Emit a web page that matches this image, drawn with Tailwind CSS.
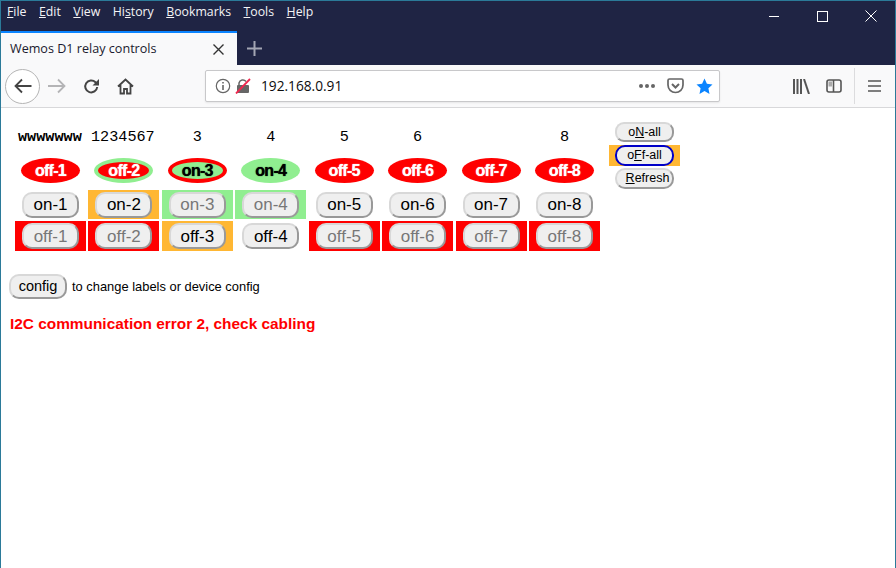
<!DOCTYPE html>
<html lang="en">
<head>
  <meta charset="UTF-8" />
  <title>Wemos D1 relay controls</title>
  <script src="https://cdn.jsdelivr.net/npm/@tailwindcss/browser@4"></script>
</head>
<body class="w-[896px] h-[568px] overflow-hidden bg-white border border-[#2b7a99] border-b-0 font-['Liberation_Sans',sans-serif] flex flex-col">

  <!-- title bar + menu -->
  <div class="h-[64px] bg-[#1f2444] text-white flex flex-col shrink-0">
    <div class="h-[30px] flex items-start">
      <div class="flex gap-[12.500px] pl-[6px] pt-[2px] text-[12.300px] leading-[18px] font-['Open_Sans',sans-serif] text-[#f4f4f6]">
        <span><u>F</u>ile</span><span><u>E</u>dit</span><span><u>V</u>iew</span><span>Hi<u>s</u>tory</span><span><u>B</u>ookmarks</span><span><u>T</u>ools</span><span><u>H</u>elp</span>
      </div>
      <div class="ml-auto flex items-center h-[30px] pr-[18px] gap-[37px]">
        <svg width="11" height="11" viewBox="0 0 11 11"><path d="M0 5.500h10" stroke="#fff" fill="none"/></svg>
        <svg width="11" height="11" viewBox="0 0 11 11"><rect x=".5" y=".5" width="10" height="10" stroke="#fff" fill="none"/></svg>
        <svg width="12" height="12" viewBox="0 0 12 12"><path d="M.5.5l11 11M11.500.5l-11 11" stroke="#fff" fill="none"/></svg>
      </div>
    </div>
    <div class="h-[34px] flex">
      <div class="w-[236px] bg-[#f9f9fa] border-t-2 border-[#0a84ff] flex items-center pl-[9px] pr-[13px] text-[12.600px] text-[#1a1a2e] font-['Open_Sans',sans-serif]">
        <span>Wemos D1 relay controls</span>
        <svg class="ml-auto" width="11" height="11" viewBox="0 0 11 11"><path d="M.5.5l10 10M10.500.5l-10 10" stroke="#333" stroke-width="1.400" fill="none"/></svg>
      </div>
      <div class="w-[34px] flex items-center justify-center">
        <svg width="15" height="15" viewBox="0 0 15 15"><path d="M7.500 0v15M0 7.500h15" stroke="#a3a5b3" stroke-width="2" fill="none"/></svg>
      </div>
    </div>
  </div>

  <!-- toolbar -->
  <div class="h-[43px] bg-[#f9f9fa] border-b border-[#d8d8da] flex items-center shrink-0">
    <div class="ml-[4px] w-[35px] h-[35px] rounded-full border border-[#b5b5b5] bg-white flex items-center justify-center">
      <svg width="18" height="16" viewBox="0 0 18 16"><path d="M1.500 8h16M8 1.500L1.500 8 8 14.500" stroke="#444" stroke-width="1.800" fill="none"/></svg>
    </div>
    <svg class="ml-[8px]" width="18" height="16" viewBox="0 0 18 16"><path d="M0 8h16M10 1.500L16.500 8 10 14.500" stroke="#b4b4b6" stroke-width="1.800" fill="none"/></svg>
    <svg class="ml-[17px]" width="17" height="17" viewBox="0 0 17 17"><path d="M14.200 9a6 6 0 1 1-1.700-4.800L15 6.500" stroke="#444" stroke-width="2" fill="none"/><path d="M16 1v6.500h-6.500z" fill="#444"/></svg>
    <svg class="ml-[17px]" width="17" height="17" viewBox="0 0 17 17"><path d="M1 8.500L8.500 1.500 16 8.500M3.500 7v8.500h3.500V11h3v4.500h3.500V7" stroke="#444" stroke-width="1.800" fill="none"/></svg>
    <div class="ml-[71px] w-[515px] h-[32px] bg-white border border-[#c8c8ca] rounded-[2px] flex items-center pl-[9px] pr-[6px] shadow-[0_1px_2px_rgba(0,0,0,0.08)]">
      <svg width="16" height="16" viewBox="0 0 16 16"><circle cx="8" cy="8" r="6.700" stroke="#666" stroke-width="1.200" fill="none"/><path d="M8 7v5M8 4v1.600" stroke="#666" stroke-width="1.600" fill="none"/></svg>
      <svg class="ml-[4px]" width="16" height="16" viewBox="0 0 16 16"><path d="M4 7V5a4 4 0 0 1 7 -1.500" stroke="#666" stroke-width="1.500" fill="none"/><rect x="2" y="7" width="12" height="8" rx="1" fill="#666"/><path d="M1 15.500L15 1" stroke="#f0274f" stroke-width="1.800" fill="none"/></svg>
      <span class="ml-[10px] text-[13.700px] text-[#0c0c0d] font-['Open_Sans',sans-serif]">192.168.0.91</span>
      <span class="ml-auto flex gap-[2px]">
        <i class="w-[4px] h-[4px] rounded-full bg-[#666]"></i><i class="w-[4px] h-[4px] rounded-full bg-[#666]"></i><i class="w-[4px] h-[4px] rounded-full bg-[#666]"></i>
      </span>
      <svg class="ml-[12px]" width="17" height="16" viewBox="0 0 17 16"><path d="M1 2.500A1.500 1.500 0 0 1 2.500 1h12A1.500 1.500 0 0 1 16 2.500V7a7.500 7.500 0 0 1-15 0z" stroke="#666" stroke-width="1.700" fill="none"/><path d="M5 6l3.500 3.500L12 6" stroke="#666" stroke-width="2" fill="none"/></svg>
      <svg class="ml-[12px]" width="17" height="17" viewBox="0 0 17 17"><path d="M8.500.5l2.400 5.200 5.600.7-4.100 3.900 1.100 5.600-5-2.800-5 2.800 1.100-5.600L.5 6.400l5.600-.7z" fill="#0a84ff"/></svg>
    </div>
    <svg class="ml-[73px]" width="17" height="15" viewBox="0 0 17 15"><path d="M1 0v15M4.500 0v15M8 0v15" stroke="#555" stroke-width="2" fill="none"/><path d="M11 0l5 15" stroke="#555" stroke-width="2" fill="none"/></svg>
    <svg class="ml-[16px]" width="16" height="14" viewBox="0 0 16 14"><rect x="1" y="1" width="14" height="12" rx="2" stroke="#555" stroke-width="1.600" fill="none"/><path d="M7.500 1v12" stroke="#555" stroke-width="1.600"/><rect x="2.500" y="2.500" width="3.500" height="5" fill="#aaa"/></svg>
    <div class="ml-[12px] w-px h-[36px] bg-[#dcdcde]"></div>
    <svg class="ml-[13px]" width="13" height="12" viewBox="0 0 13 12"><path d="M0 1h13M0 6h13M0 11h13" stroke="#555" stroke-width="1.600" fill="none"/></svg>
  </div>

  <!-- page -->
  <div class="flex-1 pl-[14px] pt-[14px] text-black">
    <div class="flex items-start">
      <div class="w-[585px] grid grid-cols-[repeat(8,71px)] gap-x-[2.430px]">
        <!-- labels -->
        <div class="col-span-2 h-[36px] pl-[3px] pt-[7px] font-['Liberation_Mono',monospace] text-[15.200px] leading-[16px] whitespace-pre"><b>wwwwwww</b> 1234567</div>
        <div class="h-[36px] pt-[7px] text-center font-['Liberation_Mono',monospace] text-[15.200px] leading-[16px]">3</div>
        <div class="h-[36px] pt-[7px] text-center font-['Liberation_Mono',monospace] text-[15.200px] leading-[16px]">4</div>
        <div class="h-[36px] pt-[7px] text-center font-['Liberation_Mono',monospace] text-[15.200px] leading-[16px]">5</div>
        <div class="h-[36px] pt-[7px] text-center font-['Liberation_Mono',monospace] text-[15.200px] leading-[16px]">6</div>
        <div class="h-[36px]"></div>
        <div class="h-[36px] pt-[7px] text-center font-['Liberation_Mono',monospace] text-[15.200px] leading-[16px]">8</div>

        <!-- status ellipses -->
        <div class="h-[32px] flex justify-center"><span class="w-[59px] h-[25px] rounded-[50%] bg-[#f00] text-white font-bold text-[16px] tracking-[-0.7px] [text-shadow:0_0_1px_currentColor] flex items-center justify-center">off-1</span></div>
        <div class="h-[32px] flex justify-center"><span class="w-[59px] h-[25px] rounded-[50%] bg-[#f00] border-[4px] border-[#90ee90] text-white font-bold text-[16px] tracking-[-0.7px] [text-shadow:0_0_1px_currentColor] flex items-center justify-center">off-2</span></div>
        <div class="h-[32px] flex justify-center"><span class="w-[59px] h-[25px] rounded-[50%] bg-[#90ee90] border-[4px] border-[#f00] font-bold text-[16px] tracking-[-0.7px] [text-shadow:0_0_1px_currentColor] flex items-center justify-center">on-3</span></div>
        <div class="h-[32px] flex justify-center"><span class="w-[59px] h-[25px] rounded-[50%] bg-[#90ee90] font-bold text-[16px] tracking-[-0.7px] [text-shadow:0_0_1px_currentColor] flex items-center justify-center">on-4</span></div>
        <div class="h-[32px] flex justify-center"><span class="w-[59px] h-[25px] rounded-[50%] bg-[#f00] text-white font-bold text-[16px] tracking-[-0.7px] [text-shadow:0_0_1px_currentColor] flex items-center justify-center">off-5</span></div>
        <div class="h-[32px] flex justify-center"><span class="w-[59px] h-[25px] rounded-[50%] bg-[#f00] text-white font-bold text-[16px] tracking-[-0.7px] [text-shadow:0_0_1px_currentColor] flex items-center justify-center">off-6</span></div>
        <div class="h-[32px] flex justify-center"><span class="w-[59px] h-[25px] rounded-[50%] bg-[#f00] text-white font-bold text-[16px] tracking-[-0.7px] [text-shadow:0_0_1px_currentColor] flex items-center justify-center">off-7</span></div>
        <div class="h-[32px] flex justify-center"><span class="w-[59px] h-[25px] rounded-[50%] bg-[#f00] text-white font-bold text-[16px] tracking-[-0.7px] [text-shadow:0_0_1px_currentColor] flex items-center justify-center">off-8</span></div>

        <!-- on row -->
        <div class="h-[29px] mb-[2px] flex items-center justify-center"><button class="w-[57px] h-[26px] rounded-[10px] border-2 border-[#d8d8d8] border-r-[#999] border-b-[#999] bg-[#efefef] text-[17px] leading-none">on-1</button></div>
        <div class="h-[29px] mb-[2px] bg-[#ffb733] flex items-center justify-center"><button class="w-[57px] h-[26px] rounded-[10px] border-2 border-[#d8d8d8] border-r-[#999] border-b-[#999] bg-[#efefef] text-[17px] leading-none">on-2</button></div>
        <div class="h-[29px] mb-[2px] bg-[#90ee90] flex items-center justify-center"><button class="w-[57px] h-[26px] rounded-[10px] border-2 border-[#d8d8d8] border-r-[#999] border-b-[#999] bg-[#efefef] text-[17px] leading-none text-[#777]">on-3</button></div>
        <div class="h-[29px] mb-[2px] bg-[#90ee90] flex items-center justify-center"><button class="w-[57px] h-[26px] rounded-[10px] border-2 border-[#d8d8d8] border-r-[#999] border-b-[#999] bg-[#efefef] text-[17px] leading-none text-[#777]">on-4</button></div>
        <div class="h-[29px] mb-[2px] flex items-center justify-center"><button class="w-[57px] h-[26px] rounded-[10px] border-2 border-[#d8d8d8] border-r-[#999] border-b-[#999] bg-[#efefef] text-[17px] leading-none">on-5</button></div>
        <div class="h-[29px] mb-[2px] flex items-center justify-center"><button class="w-[57px] h-[26px] rounded-[10px] border-2 border-[#d8d8d8] border-r-[#999] border-b-[#999] bg-[#efefef] text-[17px] leading-none">on-6</button></div>
        <div class="h-[29px] mb-[2px] flex items-center justify-center"><button class="w-[57px] h-[26px] rounded-[10px] border-2 border-[#d8d8d8] border-r-[#999] border-b-[#999] bg-[#efefef] text-[17px] leading-none">on-7</button></div>
        <div class="h-[29px] mb-[2px] flex items-center justify-center"><button class="w-[57px] h-[26px] rounded-[10px] border-2 border-[#d8d8d8] border-r-[#999] border-b-[#999] bg-[#efefef] text-[17px] leading-none">on-8</button></div>

        <!-- off row -->
        <div class="h-[30px] bg-[#f00] flex items-center justify-center"><button class="w-[57px] h-[26px] rounded-[10px] border-2 border-[#d8d8d8] border-r-[#999] border-b-[#999] bg-[#efefef] text-[17px] leading-none text-[#777]">off-1</button></div>
        <div class="h-[30px] bg-[#f00] flex items-center justify-center"><button class="w-[57px] h-[26px] rounded-[10px] border-2 border-[#d8d8d8] border-r-[#999] border-b-[#999] bg-[#efefef] text-[17px] leading-none text-[#777]">off-2</button></div>
        <div class="h-[30px] bg-[#ffb733] flex items-center justify-center"><button class="w-[57px] h-[26px] rounded-[10px] border-2 border-[#d8d8d8] border-r-[#999] border-b-[#999] bg-[#efefef] text-[17px] leading-none">off-3</button></div>
        <div class="h-[30px] flex items-center justify-center"><button class="w-[57px] h-[26px] rounded-[10px] border-2 border-[#d8d8d8] border-r-[#999] border-b-[#999] bg-[#efefef] text-[17px] leading-none">off-4</button></div>
        <div class="h-[30px] bg-[#f00] flex items-center justify-center"><button class="w-[57px] h-[26px] rounded-[10px] border-2 border-[#d8d8d8] border-r-[#999] border-b-[#999] bg-[#efefef] text-[17px] leading-none text-[#777]">off-5</button></div>
        <div class="h-[30px] bg-[#f00] flex items-center justify-center"><button class="w-[57px] h-[26px] rounded-[10px] border-2 border-[#d8d8d8] border-r-[#999] border-b-[#999] bg-[#efefef] text-[17px] leading-none text-[#777]">off-6</button></div>
        <div class="h-[30px] bg-[#f00] flex items-center justify-center"><button class="w-[57px] h-[26px] rounded-[10px] border-2 border-[#d8d8d8] border-r-[#999] border-b-[#999] bg-[#efefef] text-[17px] leading-none text-[#777]">off-7</button></div>
        <div class="h-[30px] bg-[#f00] flex items-center justify-center"><button class="w-[57px] h-[26px] rounded-[10px] border-2 border-[#d8d8d8] border-r-[#999] border-b-[#999] bg-[#efefef] text-[17px] leading-none text-[#777]">off-8</button></div>
      </div>

      <!-- side buttons -->
      <div class="ml-[9px] w-[71px] flex flex-col items-center">
        <button class="w-[59px] h-[20px] rounded-[9px] border-2 border-[#d8d8d8] border-r-[#999] border-b-[#999] bg-[#efefef] text-[12.500px] leading-none">o<u>N</u>-all</button>
        <div class="w-full h-[21px] mt-[3px] bg-[#ffb733] flex items-center justify-center"><button class="w-[59px] h-[21px] rounded-[10px] border-2 border-[#0000c8] bg-[#efefef] text-[12.500px] leading-none">o<u>F</u>f-all</button></div>
        <button class="w-[59px] h-[21px] mt-[2px] pl-[6px] rounded-[10px] border-2 border-[#d8d8d8] border-r-[#999] border-b-[#999] bg-[#efefef] text-[12.500px] leading-none whitespace-nowrap"><u>R</u>efresh</button>
      </div>
    </div>

    <div class="mt-[23px] -ml-[6px] flex items-center">
      <button class="w-[58px] h-[25px] rounded-[10px] border-2 border-[#d8d8d8] border-r-[#999] border-b-[#999] bg-[#efefef] text-[14.500px] leading-none">config</button>
      <span class="ml-[5px] text-[12.900px]">to change labels or device config</span>
    </div>
    <p class="mt-[16px] -ml-[5px] text-[15.400px] leading-[18px] font-bold text-[#f00]">I2C communication error 2, check cabling</p>
  </div>
</body>
</html>
